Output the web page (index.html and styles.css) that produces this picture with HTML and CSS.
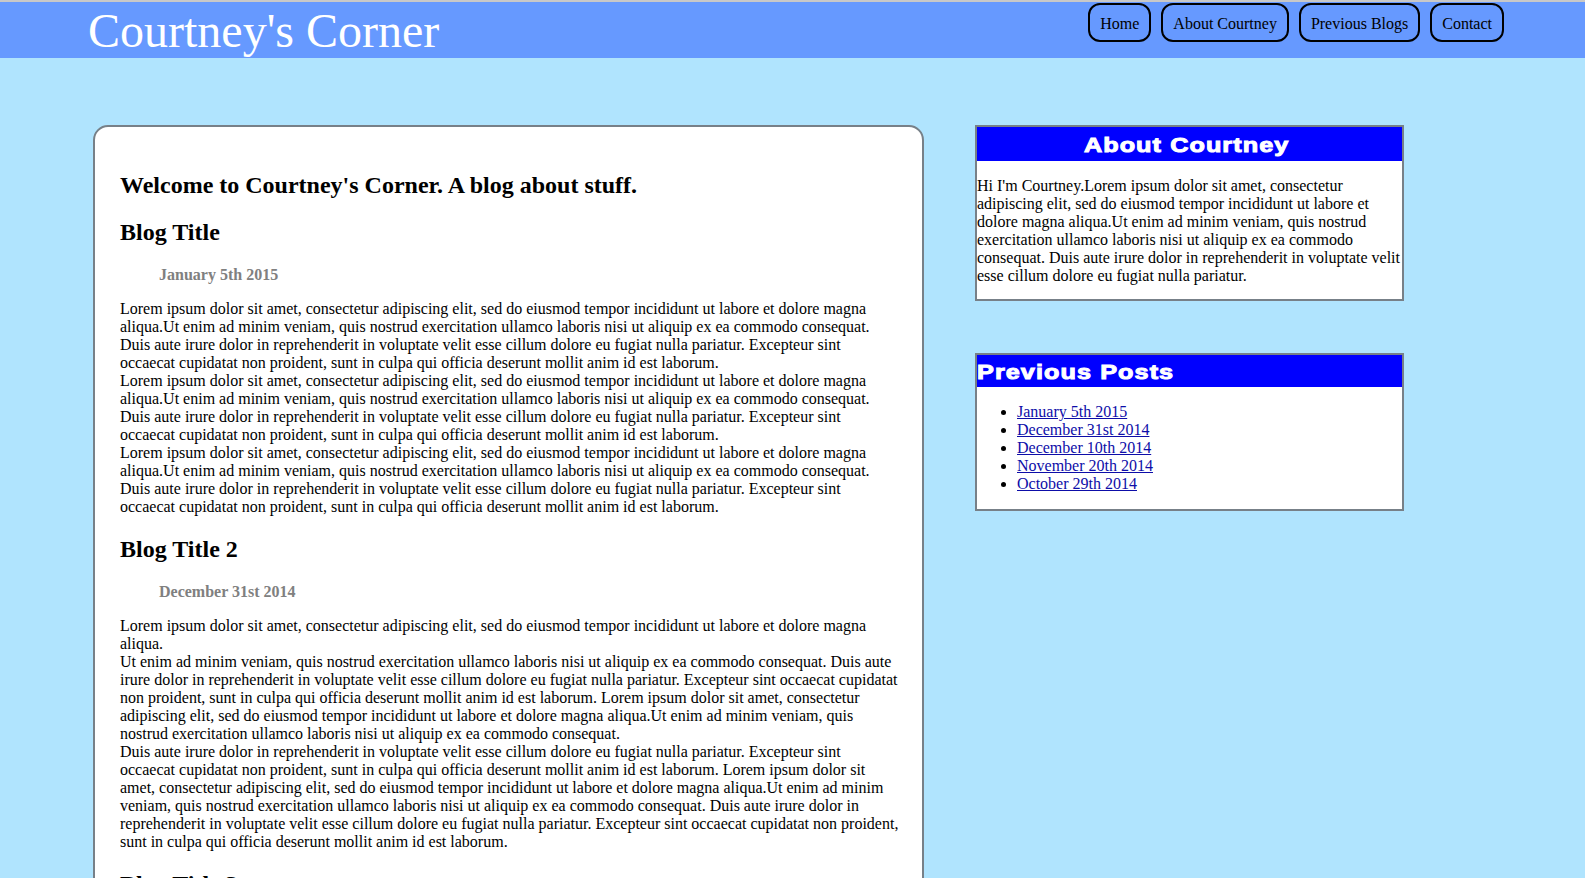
FILE: index.html
```
<!DOCTYPE html>
<html lang="en">
<head>
<meta charset="utf-8">
<title>Courtney's Corner</title>
<link rel="stylesheet" href="styles.css">
</head>
<body>
<header class="site-header">
  <h1 class="site-title">Courtney's Corner</h1>
  <nav class="site-nav">
    <a class="nav-btn" href="#">Home</a>
    <a class="nav-btn" href="#">About Courtney</a>
    <a class="nav-btn" href="#">Previous Blogs</a>
    <a class="nav-btn" href="#">Contact</a>
  </nav>
</header>
<div class="page">
  <main class="blog-card">
    <h2 class="welcome">Welcome to Courtney's Corner. A blog about stuff.</h2>
    <article class="post">
      <h2 class="post-title">Blog Title</h2>
      <p class="post-date">January 5th 2015</p>
      <p class="post-body">Lorem ipsum dolor sit amet, consectetur adipiscing elit, sed do eiusmod tempor incididunt ut labore et dolore magna aliqua.Ut enim ad minim veniam, quis nostrud exercitation ullamco laboris nisi ut aliquip ex ea commodo consequat. Duis aute irure dolor in reprehenderit in voluptate velit esse cillum dolore eu fugiat nulla pariatur. Excepteur sint occaecat cupidatat non proident, sunt in culpa qui officia deserunt mollit anim id est laborum.<br>Lorem ipsum dolor sit amet, consectetur adipiscing elit, sed do eiusmod tempor incididunt ut labore et dolore magna aliqua.Ut enim ad minim veniam, quis nostrud exercitation ullamco laboris nisi ut aliquip ex ea commodo consequat. Duis aute irure dolor in reprehenderit in voluptate velit esse cillum dolore eu fugiat nulla pariatur. Excepteur sint occaecat cupidatat non proident, sunt in culpa qui officia deserunt mollit anim id est laborum.<br>Lorem ipsum dolor sit amet, consectetur adipiscing elit, sed do eiusmod tempor incididunt ut labore et dolore magna aliqua.Ut enim ad minim veniam, quis nostrud exercitation ullamco laboris nisi ut aliquip ex ea commodo consequat. Duis aute irure dolor in reprehenderit in voluptate velit esse cillum dolore eu fugiat nulla pariatur. Excepteur sint occaecat cupidatat non proident, sunt in culpa qui officia deserunt mollit anim id est laborum.</p>
    </article>
    <article class="post">
      <h2 class="post-title">Blog Title 2</h2>
      <p class="post-date">December 31st 2014</p>
      <p class="post-body">Lorem ipsum dolor sit amet, consectetur adipiscing elit, sed do eiusmod tempor incididunt ut labore et dolore magna aliqua.<br>Ut enim ad minim veniam, quis nostrud exercitation ullamco laboris nisi ut aliquip ex ea commodo consequat. Duis aute irure dolor in reprehenderit in voluptate velit esse cillum dolore eu fugiat nulla pariatur. Excepteur sint occaecat cupidatat non proident, sunt in culpa qui officia deserunt mollit anim id est laborum. Lorem ipsum dolor sit amet, consectetur adipiscing elit, sed do eiusmod tempor incididunt ut labore et dolore magna aliqua.Ut enim ad minim veniam, quis nostrud exercitation ullamco laboris nisi ut aliquip ex ea commodo consequat.<br>Duis aute irure dolor in reprehenderit in voluptate velit esse cillum dolore eu fugiat nulla pariatur. Excepteur sint occaecat cupidatat non proident, sunt in culpa qui officia deserunt mollit anim id est laborum. Lorem ipsum dolor sit amet, consectetur adipiscing elit, sed do eiusmod tempor incididunt ut labore et dolore magna aliqua.Ut enim ad minim veniam, quis nostrud exercitation ullamco laboris nisi ut aliquip ex ea commodo consequat. Duis aute irure dolor in reprehenderit in voluptate velit esse cillum dolore eu fugiat nulla pariatur. Excepteur sint occaecat cupidatat non proident, sunt in culpa qui officia deserunt mollit anim id est laborum.</p>
    </article>
    <article class="post">
      <h2 class="post-title">Blog Title 3</h2>
      <p class="post-date">December 10th 2014</p>
      <p class="post-body">Lorem ipsum dolor sit amet, consectetur adipiscing elit, sed do eiusmod tempor incididunt ut labore et dolore magna aliqua.</p>
    </article>
  </main>
  <aside class="sidebar">
    <section class="widget widget-about">
      <h2 class="widget-head widget-head-center"><span class="widget-head-text">About Courtney</span></h2>
      <p class="widget-text">Hi I'm Courtney.Lorem ipsum dolor sit amet, consectetur adipiscing elit, sed do eiusmod tempor incididunt ut labore et dolore magna aliqua.Ut enim ad minim veniam, quis nostrud exercitation ullamco laboris nisi ut aliquip ex ea commodo consequat. Duis aute irure dolor in reprehenderit in voluptate velit esse cillum dolore eu fugiat nulla pariatur.</p>
    </section>
    <section class="widget">
      <h2 class="widget-head"><span class="widget-head-text widget-head-left">Previous Posts</span></h2>
      <ul class="post-list">
        <li><a href="#">January 5th 2015</a></li>
        <li><a href="#">December 31st 2014</a></li>
        <li><a href="#">December 10th 2014</a></li>
        <li><a href="#">November 20th 2014</a></li>
        <li><a href="#">October 29th 2014</a></li>
      </ul>
    </section>
  </aside>
</div>
</body>
</html>
```
FILE: styles.css
```
html, body {
  margin: 0;
  padding: 0;
}

body {
  background: #b0e4fe;
  font-family: "Liberation Serif", "Times New Roman", serif;
  font-size: 16px;
  line-height: 18px;
  color: #000;
}

.site-header {
  box-sizing: border-box;
  height: 58px;
  border-top: 2px solid #c8c8c8;
  background: #6699ff;
  display: flex;
  justify-content: space-between;
  align-items: flex-start;
  padding: 0 81px 0 88px;
}

.site-title {
  margin: 0;
  padding-top: 2px;
  font-size: 48px;
  line-height: 54px;
  font-weight: normal;
  color: #fff;
}

.site-nav {
  display: flex;
  gap: 10px;
  margin-top: 1px;
}

.nav-btn {
  display: block;
  border: 2px solid #000;
  border-radius: 12px;
  padding: 10.5px 10px 8.5px;
  color: #000;
  text-decoration: none;
  font-size: 16px;
  line-height: 16px;
}

.page {
  display: flex;
  align-items: flex-start;
  padding: 67px 0 0 93px;
}

.blog-card {
  box-sizing: border-box;
  width: 831px;
  flex: none;
  background: #fff;
  border: 2px solid #778088;
  border-radius: 15px;
  padding: 24.5px 23.5px 20px 25px;
}

.welcome,
.post-title {
  font-size: 24px;
  line-height: 27px;
  font-weight: bold;
  margin: 20px 0;
}

.post-date {
  margin: 16px 0 16px 39px;
  font-weight: bold;
  color: #808080;
}

.post-body {
  margin: 16px 0;
}

.sidebar {
  width: 429px;
  flex: none;
  margin-left: 51px;
  display: flex;
  flex-direction: column;
  gap: 52px;
}

.widget {
  box-sizing: border-box;
  background: #fff;
  border: 2px solid #778088;
}

.widget-head {
  margin: 0;
  height: 32px;
  background: #0000ff;
  color: #fff;
  font-family: "Liberation Sans", Arial, sans-serif;
  font-size: 21px;
  line-height: 34px;
  font-weight: bold;
  overflow: hidden;
}

.widget-about .widget-head {
  height: 34px;
  line-height: 35px;
}

.widget-about .widget-text {
  margin-bottom: 14px;
}

.widget-head-center {
  text-align: center;
  padding-right: 6px;
}

.widget-head-text {
  display: inline-block;
  letter-spacing: 0.9px;
  -webkit-text-stroke: 1px #fff;
  transform: scaleX(1.2);
  transform-origin: center;
}

.widget-head-left {
  transform-origin: left center;
}

.widget-text {
  margin: 16px 0;
}

.post-list {
  margin: 16px 0;
  padding-left: 40px;
}

.post-list a {
  color: #0d0da8;
}
```
